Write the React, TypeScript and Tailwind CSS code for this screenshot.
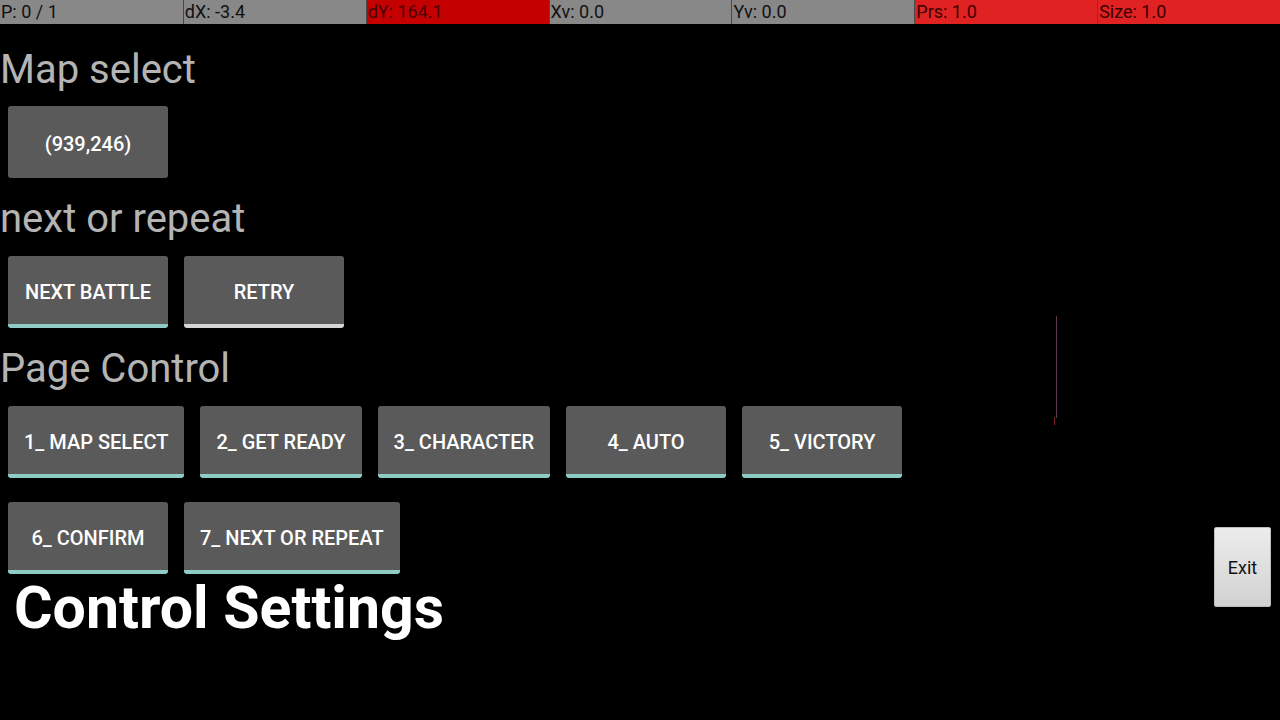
import React from 'react';

const stats = [
  { label: 'P: 0 / 1', bg: 'bg-[#888888]', text: 'text-[#111111]' },
  { label: 'dX: -3.4', bg: 'bg-[#888888]', text: 'text-[#111111]' },
  { label: 'dY: 164.1', bg: 'bg-[#c40000]', text: 'text-[#4a0000]' },
  { label: 'Xv: 0.0', bg: 'bg-[#888888]', text: 'text-[#111111]' },
  { label: 'Yv: 0.0', bg: 'bg-[#888888]', text: 'text-[#111111]' },
  { label: 'Prs: 1.0', bg: 'bg-[#e02222]', text: 'text-[#3a0000]' },
  { label: 'Size: 1.0', bg: 'bg-[#e02222]', text: 'text-[#3a0000]' },
];

function Btn({ label, line = 'teal', normalCase = false }: { label: string; line?: 'teal' | 'gray' | 'none'; normalCase?: boolean }) {
  const border =
    line === 'teal' ? 'border-b-4 border-[#8ecbc3]' : line === 'gray' ? 'border-b-4 border-[#d6d6d6]' : '';
  return (
    <div
      className={`flex h-[72px] min-w-[160px] items-center justify-center rounded-[3px] bg-[#5a5a5a] px-4 pt-1 text-[20px] font-medium text-white ${border} ${normalCase ? '' : 'uppercase'}`}
    >
      {label}
    </div>
  );
}

function Heading({ children, className = '' }: { children: React.ReactNode; className?: string }) {
  return <h2 className={`text-[40px] leading-[48px] text-[#b4b4b4] ${className}`}>{children}</h2>;
}

export default function App() {
  return (
    <div className="relative h-[720px] w-[1280px] overflow-hidden bg-black font-['Roboto',sans-serif]">
      {/* touch debug bar */}
      <div className="grid h-[24px] grid-cols-7 border-b border-[#303030]">
        {stats.map((s, i) => (
          <div
            key={s.label}
            className={`${s.bg} ${s.text} ${i > 0 ? 'border-l border-[#4a4a4a]' : ''} pl-[1px] text-[18px] leading-[24px]`}
          >
            {s.label}
          </div>
        ))}
      </div>

      <Heading className="mt-[22px]">Map select</Heading>
      <div className="mt-[12px] flex px-2">
        <Btn label="(939,246)" line="none" normalCase />
      </div>

      <Heading className="mt-[17px]">next or repeat</Heading>
      <div className="mt-[13px] flex gap-4 px-2">
        <Btn label="Next Battle" />
        <Btn label="Retry" line="gray" />
      </div>

      <Heading className="mt-[17px]">Page Control</Heading>
      <div className="mt-[13px] flex gap-4 px-2">
        <Btn label="1_ Map Select" />
        <Btn label="2_ Get Ready" />
        <Btn label="3_ Character" />
        <Btn label="4_ Auto" />
        <Btn label="5_ Victory" />
      </div>
      <div className="mt-[24px] flex gap-4 px-2">
        <Btn label="6_ Confirm" />
        <Btn label="7_ Next or Repeat" />
      </div>

      <h1 className="mt-[4px] pl-[14px] text-[59px] font-bold leading-[59px] text-white">Control Settings</h1>

      {/* pointer trace */}
      <div className="absolute left-[1056px] top-[316px] h-[102px] w-px bg-[#5b3a52]" />
      <div className="absolute left-[1054px] top-[417px] h-[8px] w-px bg-[#7a2a2a]" />

      <button className="absolute left-[1214px] top-[527px] flex h-[80px] w-[57px] items-center justify-center rounded-[2px] border border-[#bdbdbd] bg-gradient-to-b from-[#ececec] to-[#d2d2d2] text-[18px] text-[#111111]">
        Exit
      </button>
    </div>
  );
}
